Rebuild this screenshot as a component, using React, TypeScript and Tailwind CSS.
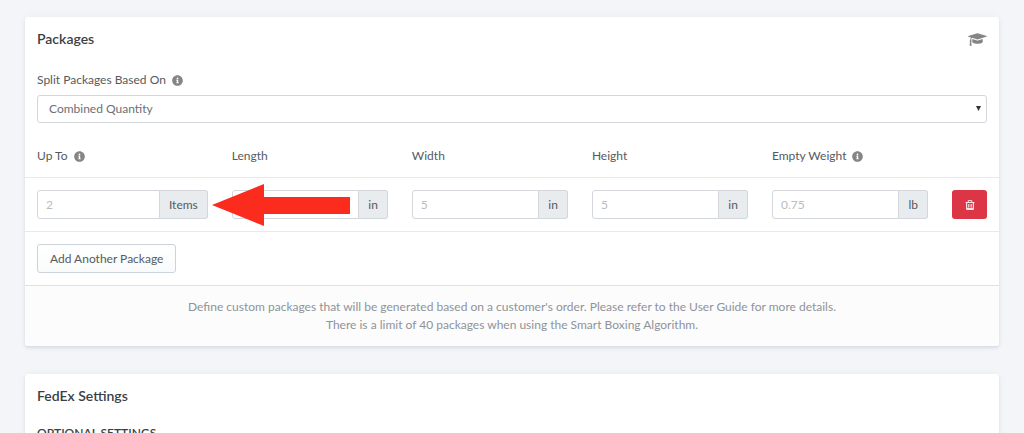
import React from 'react';
import { FaInfoCircle } from 'react-icons/fa';

const columns = [
  { label: 'Up To', info: true, placeholder: '2', unit: 'Items' },
  { label: 'Length', info: false, placeholder: '5', unit: 'in' },
  { label: 'Width', info: false, placeholder: '5', unit: 'in' },
  { label: 'Height', info: false, placeholder: '5', unit: 'in' },
  { label: 'Empty Weight', info: true, placeholder: '0.75', unit: 'lb' },
];

function Card({ children }: { children: React.ReactNode }) {
  return (
    <section className="rounded-[3px] bg-white shadow-[0_2px_3px_rgba(60,75,95,0.12),0_0_10px_rgba(60,75,95,0.04)]">
      {children}
    </section>
  );
}

function InfoIcon() {
  return <FaInfoCircle className="size-[11px] text-[#858585]" />;
}

function GraduationCapIcon() {
  return (
    <svg className="h-[15px] w-[19px] text-[#858585]" viewBox="0 0 2304 1792" fill="currentColor">
      <path d="M1774 836l18 316q4 69-82 128t-235 93.5-323 34.5-323-34.5-235-93.5-82-128l18-316 574 181q22 7 48 7t48-7zm530-324q0 23-22 31l-1120 352q-4 1-10 1t-10-1l-652-206q-43 34-71 111.5t-34 178.5q63 36 63 109 0 69-58 107l58 433q2 14-8 25-9 11-24 11h-192q-15 0-24-11-10-11-8-25l58-433q-58-38-58-107 0-73 65-111 11-207 98-330l-333-104q-22-8-22-31t22-31l1120-352q4-1 10-1t10 1l1120 352q22 8 22 31z" />
    </svg>
  );
}

function TrashIcon() {
  return (
    <svg className="size-[10px]" viewBox="0 0 10 10" fill="none" stroke="currentColor">
      <path d="M.5 2.5h9M3.2 2.2V.6h3.6v1.6" />
      <path d="M1.6 2.5v6.2q0 .8.8.8h5.2q.8 0 .8-.8V2.5" strokeWidth="1.2" />
      <path d="M3.5 4v3.5M5 4v3.5M6.5 4v3.5" strokeWidth=".8" />
      <path d="M2 8.6h6" strokeWidth="1.4" />
    </svg>
  );
}

function Arrow() {
  return (
    <svg
      className="pointer-events-none absolute top-1/2 left-full z-10 ml-1 h-[42px] w-[138px] -translate-y-1/2"
      viewBox="0 0 138 42"
    >
      <path d="M0 21 52 0v13h86v17H52v12z" fill="#fb2b1d" />
    </svg>
  );
}

export default function App() {
  return (
    <main className="flex h-screen flex-col gap-7 overflow-hidden bg-[#f3f5f8] px-[25px] pt-[17px] font-[Lato,sans-serif] text-[12px] leading-[18px] text-[#555a60] *:shrink-0">
      <Card>
        <div className="flex items-center justify-between px-3 pt-3">
          <h2 className="text-[14px] leading-5 font-semibold text-[#3b4046]">Packages</h2>
          <GraduationCapIcon />
        </div>

        <div className="px-3 pt-[22px]">
          <label htmlFor="split" className="flex items-center gap-[6px]">
            Split Packages Based On
            <InfoIcon />
          </label>
          <div className="relative mt-[6px]">
            <select
              id="split"
              className="block h-7 w-full appearance-none rounded-[3px] border border-[#d3d7db] bg-white px-[11px] text-[#6b7076]"
            >
              <option>Combined Quantity</option>
            </select>
            <svg
              className="pointer-events-none absolute top-[11px] right-[6px] h-[5px] w-[5px]"
              viewBox="0 0 5 5"
            >
              <path d="M0 0h5L2.5 5z" fill="#333" />
            </svg>
          </div>
        </div>

        <table className="mt-3 w-full table-fixed">
          <thead>
            <tr className="border-b border-[#e7e9eb]">
              {columns.map((col, i) => (
                <th
                  key={col.label}
                  id={`col-${i}`}
                  className="px-3 py-3 text-left font-normal first:w-1/5"
                >
                  <span className="flex items-center gap-[6px]">
                    {col.label}
                    {col.info && <InfoIcon />}
                  </span>
                </th>
              ))}
              <td className="w-[59px]" />
            </tr>
          </thead>
          <tbody>
            <tr className="border-b border-[#e7e9eb]">
              {columns.map((col, i) => (
                <td key={col.label} className="px-3 py-3">
                  <div className="relative flex h-[29px]">
                    <input
                      type="text"
                      aria-labelledby={`col-${i}`}
                      placeholder={col.placeholder}
                      className="min-w-0 flex-1 rounded-l-[3px] border border-[#d3d7db] bg-white px-2 placeholder:text-[#b9bcc0]"
                    />
                    <span className="flex items-center rounded-r-[3px] border border-l-0 border-[#d3d7db] bg-[#e9ecef] px-[9px]">
                      {col.unit}
                    </span>
                    {i === 0 && <Arrow />}
                  </div>
                </td>
              ))}
              <td className="px-3 py-3">
                <button
                  type="button"
                  aria-label="Delete package"
                  className="flex h-[29px] w-full items-center justify-center rounded-[3px] bg-[#dc3545] text-[#fbdfe2]"
                >
                  <TrashIcon />
                </button>
              </td>
            </tr>
          </tbody>
        </table>

        <div className="px-3 py-3">
          <button
            type="button"
            className="h-[29px] rounded-[3px] border border-[#cdd3da] bg-linear-to-b from-white to-[#f9fafb] px-3"
          >
            Add Another Package
          </button>
        </div>

        <p className="rounded-b-[3px] border-t border-[#dfe2e5] bg-[#fcfcfd] px-3 py-3 text-center text-[#8e9398]">
          Define custom packages that will be generated based on a customer's order. Please refer to the User Guide for
          more details.
          <br />
          There is a limit of 40 packages when using the Smart Boxing Algorithm.
        </p>
      </Card>

      <Card>
        <div className="px-3 pt-3 pb-6">
          <h2 className="text-[14px] leading-5 font-semibold text-[#3b4046]">FedEx Settings</h2>
          <h3 className="mt-[18px] text-[12px] font-semibold text-[#3b4046]">OPTIONAL SETTINGS</h3>
        </div>
      </Card>
    </main>
  );
}
